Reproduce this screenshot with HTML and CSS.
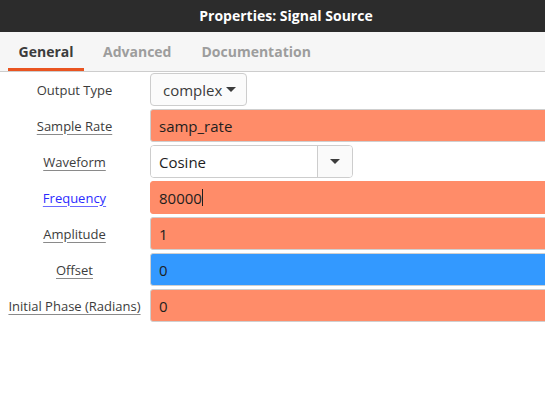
FILE: index.html
```html
<!DOCTYPE html>
<html>
<head>
<meta charset="utf-8">
<link rel="stylesheet" href="styles.css">
</head>
<body>
<div class="window">
  <header class="titlebar">Properties: Signal Source</header>
  <nav class="tabs">
    <div class="tab active">General</div>
    <div class="tab">Advanced</div>
    <div class="tab">Documentation</div>
  </nav>
  <div class="form">
    <div class="label plain">Output Type</div>
    <div class="field">
      <div class="combo">complex<span class="arrow small"></span></div>
    </div>

    <div class="label">Sample Rate</div>
    <div class="field"><div class="entry orange">samp_rate</div></div>

    <div class="label">Waveform</div>
    <div class="field">
      <div class="combo-entry">
        <div class="ce-text">Cosine</div>
        <div class="ce-btn"><span class="arrow"></span></div>
      </div>
    </div>

    <div class="label link">Frequency</div>
    <div class="field"><div class="entry orange focus">80000<span class="caret"></span></div></div>

    <div class="label">Amplitude</div>
    <div class="field"><div class="entry orange">1</div></div>

    <div class="label">Offset</div>
    <div class="field"><div class="entry blue">0</div></div>

    <div class="label">Initial Phase (Radians)</div>
    <div class="field"><div class="entry orange">0</div></div>
  </div>
</div>
</body>
</html>
```
FILE: styles.css
```css
* { box-sizing: border-box; }
html, body {
  margin: 0;
  padding: 0;
  background: #ffffff;
  overflow: hidden;
}
body {
  font-family: "Open Sans", "DejaVu Sans", sans-serif;
  color: #3c3c3c;
}
.window {
  width: 545px;
  height: 410px;
  overflow: hidden;
}
.titlebar {
  height: 32px;
  background: #2c2c2c;
  color: #ffffff;
  font-weight: 700;
  font-size: 14px;
  display: flex;
  align-items: center;
  justify-content: center;
  padding-left: 27px;
  padding-bottom: 1px;
}
.tabs {
  height: 40px;
  background: #f6f6f6;
  border-bottom: 1px solid #cdcdcd;
  display: flex;
  padding-left: 8px;
}
.tab {
  font-size: 14px;
  font-weight: 700;
  color: #9d9d9d;
  padding: 0 12px;
  display: flex;
  align-items: center;
  margin-right: 6px;
  border-bottom: 3px solid transparent;
  padding-top: 3px;
}
.tab.active {
  color: #3c3c3c;
  border-bottom-color: #e95420;
  width: 76px;
  justify-content: center;
  margin-right: 7px;
}
.form {
  display: grid;
  grid-template-columns: 150px 1fr;
  grid-auto-rows: 33px;
  row-gap: 3px;
  padding-top: 1px;
}
.label {
  display: flex;
  align-items: center;
  justify-content: center;
  font-size: 13px;
  color: #3c3c3c;
  text-decoration: underline;
  text-decoration-color: #8a8a8a;
  text-underline-offset: 3px;
  white-space: nowrap;
  padding-right: 1px;
}
.label.plain { text-decoration: none; }
.label.link { color: #2b2bff; text-decoration-color: #6a6aff; }
.field {
  display: flex;
  align-items: stretch;
  margin-right: -10px;
}
.entry {
  flex: 1;
  display: flex;
  align-items: center;
  padding-left: 8px;
  font-size: 15px;
  color: #1e1e1e;
  border: 1px solid #cfcfcf;
  border-radius: 3px;
}
.entry.orange { background: #ff8c69; }
.entry.blue { background: #3399ff; }
.entry.focus { border-color: #ff8c69; }
.caret {
  display: inline-block;
  width: 1px;
  height: 17px;
  background: #1e1e1e;
}
.combo {
  width: 97px;
  border: 1px solid #cdcdcd;
  border-radius: 4px;
  background: #fbfbfb;
  display: flex;
  align-items: center;
  padding-left: 12px;
  font-size: 15px;
  color: #3c3c3c;
}
.arrow {
  display: inline-block;
  width: 0;
  height: 0;
  border-left: 5px solid transparent;
  border-right: 5px solid transparent;
  border-top: 5px solid #3c3c3c;
}
.arrow.small { margin-left: 4px; }
.combo-entry {
  display: flex;
  width: 203px;
  border: 1px solid #cdcdcd;
  border-radius: 4px;
  overflow: hidden;
}
.ce-text {
  flex: 1;
  background: #ffffff;
  display: flex;
  align-items: center;
  padding-left: 8px;
  font-size: 15px;
  color: #1e1e1e;
}
.ce-btn {
  width: 35px;
  border-left: 1px solid #cdcdcd;
  background: #fafafa;
  display: flex;
  align-items: center;
  justify-content: center;
}
```
